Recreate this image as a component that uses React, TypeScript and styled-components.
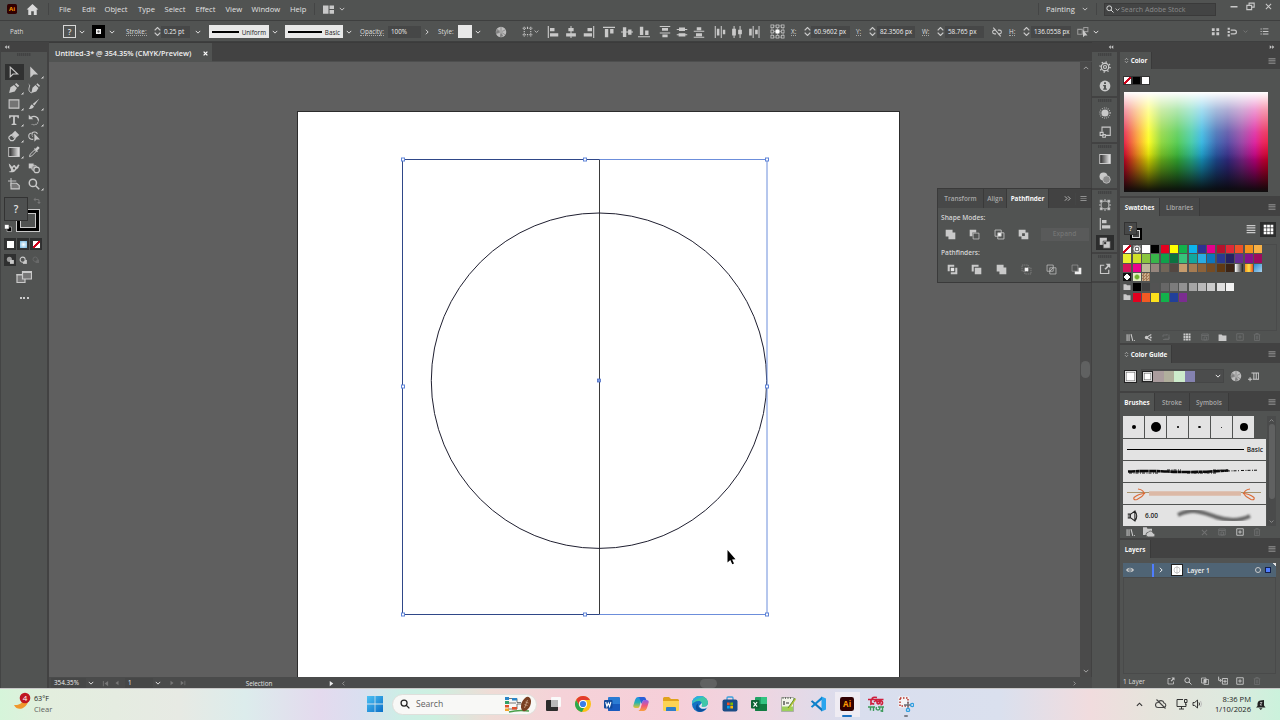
import React from 'react';
import styled, { createGlobalStyle, css } from 'styled-components';

const GlobalStyle = createGlobalStyle`
  * {
    box-sizing: border-box;
  }

  body {
    margin: 0;
    overflow: hidden;
    background: #515352;
    font-family: 'Open Sans', 'Noto Sans', sans-serif;
    font-size: 7px;
    color: #dcdcdc;
  }

  svg {
    display: block;
    flex-shrink: 0;
  }
`;

const panel = '#515352';
const dark = '#424242';
const line = '#3e3f3f';
const light = '#c9c9c9';

/* ---------- icons, all on a 16 unit grid ---------- */

const glyphs: Record<string, React.ReactNode> = {
  home: <path d="M8 1.2 0.8 8h2v6.8h3.6V10h3.2v4.8h3.6V8h2z" />,
  layout: <path d="M0 2h8v12H0zM9.5 2H16v5.2H9.5zM9.5 8.8H16V14H9.5z" />,
  down: <path d="m2 5 6 6 6-6" fill="none" stroke="currentColor" strokeWidth="2.6" />,
  up: <path d="m2 11 6-6 6 6" fill="none" stroke="currentColor" strokeWidth="2.6" />,
  right: <path d="m5 2 6 6-6 6" fill="none" stroke="currentColor" strokeWidth="2.4" />,
  left: <path d="M11 2 5 8l6 6" fill="none" stroke="currentColor" strokeWidth="2.4" />,
  spinner: <path d="m3 6 5-5 5 5M3 10l5 5 5-5" fill="none" stroke="currentColor" strokeWidth="2.2" />,
  collapseL: <path d="M7.5 3v10L2 8zM14 3v10L8.500 8z" />,
  collapseR: <path d="M2 3v10l5.500-5zM8.500 3v10L14 8z" />,
  doubleRight: <path d="m2 3 5 5-5 5M9 3l5 5-5 5" fill="none" stroke="currentColor" strokeWidth="2" />,
  search: (
    <g fill="none" stroke="currentColor" strokeWidth="2">
      <circle cx="6.500" cy="6.500" r="4.800" />
      <path d="m10 10 5 5" />
    </g>
  ),
  minimize: <path d="M1 8h14v3H1z" />,
  restore: <path d="M5.500 6V2h9v7H10M1.500 6h8.500v7.500H1.500z" fill="none" stroke="currentColor" strokeWidth="2" />,
  close: <path d="m2 2 12 12M14 2 2 14" fill="none" stroke="currentColor" strokeWidth="2.300" />,
  closeBold: <path d="m2 2 12 12M14 2 2 14" fill="none" stroke="currentColor" strokeWidth="4" />,
  menu: <path d="M1 3h14v1.500H1zM1 7.200h14v1.500H1zM1 11.500h14V13H1z" />,
  lines: <path d="M1 1.500h14v2H1zM1 5.200h14v2H1zM1 9h14v2H1zM1 12.700h14v2H1z" />,
  globe: (
    <>
      <circle cx="8" cy="8" r="7" fill="#bdbdbd" />
      <path d="M8 8 2 4M8 8 8 1M8 8l6-3M8 8l6 4M8 8l-1 7M8 8l-6.500 2" stroke="#666" strokeWidth=".7" />
      <path d="M8 8 2 5l-.8 5zM8 8l-1 6.800 4-1.200z" fill="#808080" />
      <circle cx="8" cy="8" r="2.200" fill="#a6a6a6" />
    </>
  ),
  dotted: <path d="M2 4h12M2 12h12M4 2v12M12 2v12M8 2v3M8 11v3" fill="none" stroke="currentColor" strokeWidth="1.400" strokeDasharray="1.500 1.200" />,
  alignL: <path d="M1 0h1.500v16H1zM4 2.500h6v4.500H4zM4 9.500h11V14H4z" />,
  alignC: <path d="M7.300 0h1.400v16H7.300zM4.500 2.500h7V7h-7zM1.500 9.500h13V14h-13z" />,
  alignR: <path d="M13.500 0H15v16h-1.500zM6 2.500h6V7H6zM1 9.500h11V14H1z" />,
  alignT: <path d="M0 1h16v1.500H0zM2.500 4H7v11H2.500zM9.500 4H14v6H9.500z" />,
  alignM: <path d="M0 7.300h16v1.400H0zM2.500 1.500H7v13H2.500zM9.500 4.500H14v7H9.500z" />,
  alignB: <path d="M0 13.500h16V15H0zM2.500 1H7v11H2.500zM9.500 6H14v6H9.500z" />,
  distT: <path d="M1 0h14v1.400H1zM4 2.800h8v3.600H4zM1 8.500h14v1.400H1zM4.500 11.300h7V15h-7z" />,
  distM: <path d="M1 4h14v1.400H1zM4 2h8v4.500H4zM1 11h14v1.400H1zM3.500 9.500h9V14h-9z" />,
  distB: <path d="M1 6.200h14v1.400H1zM5 1.500h6v4H5zM1 14.200h14v1.400H1zM4 9.500h8v4H4z" />,
  distL: <path d="M1 0h1.400v16H1zM3.800 3.500h3.400v9H3.800zM9 0h1.400v16H9zM11.800 5H15v6h-3.200z" />,
  distC: <path d="M3.400 0h1.400v16H3.400zM1.500 3.500h5v9h-5zM11.400 0h1.400v16h-1.400zM9.500 5h5v6h-5z" />,
  distR: <path d="M6.200 0h1.400v16H6.200zM1.500 3.500H5v9H1.500zM14 0h1.400v16H14zM9.500 5H13v6H9.500z" />,
  refPoint: (
    <>
      <path d="M2 2h12v12H2zM8 2v12M2 8h12" fill="none" stroke="#999" strokeWidth="1" />
      {[2.5, 8, 13.5].map((y) =>
        [2.5, 8, 13.5].map((x) => (
          <rect key={`${x}-${y}`} x={x - 1.5} y={y - 1.5} width="3" height="3" fill={panel} stroke="currentColor" strokeWidth=".8" />
        )),
      )}
      <rect x="6" y="6" width="4" height="4" fill="#fff" />
    </>
  ),
  unlink: (
    <g fill="none" stroke="currentColor" strokeWidth="1.700">
      <path d="M6.500 5H4a3 3 0 0 0 0 6h2.500M9.500 5H12a3 3 0 0 1 0 6H9.500M2 1l12 14" />
    </g>
  ),
  isolate: (
    <>
      <path d="M1 4.500h6V11H1zM9 2h5.500v5.500H9z" fill="none" stroke="#9b9b9b" strokeWidth="1.400" />
      <path d="m8 5 0 10 2.500-2.500H14z" />
    </>
  ),
  fourGrid: <path d="M1.500 2h5v5h-5zM9.500 2h5v5h-5zM1.500 9.500h5v5h-5zM9.500 9.500h5v5h-5z" />,
  snap: (
    <>
      <path d="M1 1h3.500v3.500H1zM1 6.200h3.500v3.500H1zM1 11.500h3.500V15H1z" />
      <path d="M6 5h6a3 3 0 0 1 0 6H6" fill="none" stroke="currentColor" strokeWidth="2" />
    </>
  ),
  list: <path d="M1 2.500h2v2H1zM5 2.700h10v1.500H5zM1 7h2v2H1zM5 7.200h10v1.500H5zM1 11.500h2v2H1zM5 11.700h10v1.500H5z" />,
  select: <path d="M3 1.500v12.800l3.800-3.600h6z" fill="none" stroke="currentColor" strokeWidth="1.500" />,
  direct: <path d="M3 .5v15l4.500-4.300h6z" />,
  pen: <path d="M1.500 14.800 3.300 7 8 4l4 4-3 4.800zM9.200 3 11 1.200 15 5l-1.900 1.900z" />,
  curvature: (
    <>
      <path d="M4.500 14.800 6 7.500 10 4l4 4-3 4.500zM11 3l1.600-1.500L16 5l-1.300 1.500z" />
      <path d="M1 3c3 2-1 5 .5 8.500.5 1.500 1.500 2.500 3.500 3" fill="none" stroke="currentColor" strokeWidth="1.300" />
    </>
  ),
  rect: <path d="M1.500 2.500h13v11h-13z" fill="#747474" stroke="currentColor" strokeWidth="1.500" />,
  brush: <path d="M15 1 8.500 10 6.300 8zM5.300 8.600l2.600 2.500c-.6 3-3.600 4-7 3.500C2.800 13.600 2.500 9.500 5.300 8.600z" />,
  type: <path d="M1.500 1.500h13V5.500H13L12.300 3.600H9.200v9.100l2 .6v1.200H4.800v-1.200l2-.6V3.600H3.700L3 5.500H1.500z" />,
  rotate: (
    <>
      <path d="M4 4.800a6 6 0 0 1 10 3.700" fill="none" stroke="currentColor" strokeWidth="1.800" />
      <path d="M14 8.500a6 6 0 0 1-9 5" fill="none" stroke="currentColor" strokeWidth="1.500" strokeDasharray="1.500 1.300" />
      <path d="M1 1v6h6z" />
    </>
  ),
  eraser: (
    <>
      <path d="m9.500 1 5.500 5.500L10 11 4.800 5.600z" />
      <path d="m4.300 6.300 5.200 5.200-2.700 2.700H3.500L1.200 11V9.300z" fill="none" stroke="currentColor" strokeWidth="1.500" />
    </>
  ),
  shapeBuilder: (
    <>
      <path d="M7 12.500C2.500 12.500 1 10.500 1 8s2-4 4.500-4C7 1.800 12 2 12.500 5.500" fill="none" stroke="currentColor" strokeWidth="1.400" />
      <path d="M4 6.500h5M6 4v6" stroke="currentColor" strokeDasharray="1 1" />
      <path d="M8.500 4.500v11l2.800-2.700H16z" />
    </>
  ),
  eyedropper: (
    <>
      <path d="M2 14.200 2.800 11 8.500 5.500 10.600 7.600 5 13.200z" fill="none" stroke="currentColor" strokeWidth="1.300" />
      <path d="m8 4 1.200-1.200 1 1L12.500.8c1.200-1 3.500 1 2.500 2.500L12.200 6l1 1L12 8.200z" />
    </>
  ),
  puppet: (
    <>
      <path d="M1 2c2 1 3 3 4.500 4.500C7 4 9 3 10 5.500c.5 1.500 2 1 2.500-1S15 3 15.500 4.500c-1.500 0-1 3-2.500 4S10.500 10 9.500 12 2 14.500 1 12.500C4 13 5 11 3.500 9S1.500 5 1 2z" />
      <circle cx="8" cy="8.500" r="1.500" fill={panel} />
    </>
  ),
  blend: (
    <>
      <path d="M1 2h6.500v6.500H1z" />
      <circle cx="8.500" cy="8" r="3.700" fill="#919191" stroke="currentColor" />
      <circle cx="11.500" cy="10.500" r="3.700" fill={panel} stroke="currentColor" strokeWidth="1.500" />
    </>
  ),
  artboard: (
    <>
      <path d="M4 0v11M0 4h11" stroke="currentColor" strokeWidth="1.300" />
      <path d="M4 7h7.500L15 10v4.500H4z" fill="#777" stroke="currentColor" strokeWidth="1.500" />
    </>
  ),
  modeNormal: (
    <>
      <circle cx="6" cy="6" r="4.500" fill="#9a9a9a" />
      <path d="M7 7h7v7H7z" />
    </>
  ),
  modeBehind: (
    <>
      <path d="M7 7h7v7H7z" />
      <circle cx="6.500" cy="6.500" r="4.500" fill={panel} stroke="currentColor" strokeWidth="1.800" />
    </>
  ),
  screens: (
    <>
      <path d="M1 5.500h8v8H1z" fill="#777" stroke="currentColor" strokeWidth="1.200" />
      <path d="M6.500 2.500h9v7.500h-9z" fill="#777" stroke="currentColor" strokeWidth="1.200" />
      <path d="M6 2h10v2H6zM.5 5h5.500v1.500H.5z" />
    </>
  ),
  gear: (
    <g fill="none" stroke="currentColor">
      <circle cx="8" cy="8" r="5" strokeWidth="1.700" />
      <circle cx="8" cy="8" r="2" strokeWidth="1.600" />
      <circle cx="8" cy="8" r="6.700" strokeWidth="2" strokeDasharray="1.700 3.560" />
    </g>
  ),
  info: (
    <>
      <circle cx="8" cy="8" r="7.200" />
      <path d="M6.700 3h2.600v2.300H6.700zM5.500 6.800h3.800v4.500h1.200V13h-5v-1.700h1.200V8.400H5.500z" fill={panel} />
    </>
  ),
  sun: (
    <>
      <circle cx="8" cy="8" r="4.800" />
      <circle cx="8" cy="8" r="6.800" fill="none" stroke="currentColor" strokeWidth="1.500" strokeDasharray="1 1.700" />
    </>
  ),
  export: (
    <>
      <path d="M4 7.500V1.500h11v11H9" fill="none" stroke="currentColor" strokeWidth="1.400" />
      <path d="M1.500 8.500h4v4h-4zM5 11.500h3.500v3.500H5z" fill={panel} stroke="currentColor" strokeWidth="1.400" />
    </>
  ),
  transparency: (
    <>
      <circle cx="6" cy="6" r="5.300" />
      <circle cx="10" cy="10" r="5" fill="#8b8b8b" stroke="currentColor" />
    </>
  ),
  transform: (
    <>
      <path d="M3 3h10v10H3z" fill="none" stroke="currentColor" strokeWidth="1.400" />
      <path d="M1 1h4v4H1zM11 1h4v4h-4zM1 11h4v4H1zM11 11h4v4h-4zM7 0h2v3H7zM7 13h2v3H7zM0 7h3v2H0zM13 7h3v2h-3z" stroke={panel} strokeWidth=".5" />
    </>
  ),
  pathfinder: (
    <>
      <path d="M1 1h9.500v9.500H1z" />
      <path d="M5.500 5.500H15V15H5.500z" stroke={dark} />
      <path d="M6.800 6.800h2.800v2.800H6.800z" fill="#333" />
    </>
  ),
  openOut: (
    <>
      <path d="M7 3H2v11h11V9" fill="none" stroke="currentColor" strokeWidth="1.600" />
      <path d="M9 1h6v6l-2-2-4 4L7.300 7.500l4-4z" />
    </>
  ),
  unite: <path d="M1 1h10v4h4v10H5v-4H1z" />,
  minusFront: (
    <>
      <path d="M1 1h9.500v4H5v5.500H1z" />
      <path d="M6 6h8.500v8.500H6z" fill="none" stroke="currentColor" strokeWidth="1.100" />
    </>
  ),
  intersect: (
    <>
      <path d="M1.500 1.500h9v9h-9zM5.500 5.500h9v9h-9z" fill="none" stroke="currentColor" strokeWidth="1.200" />
      <path d="M6 6h4v4H6z" fill="#fff" />
    </>
  ),
  exclude: <path fillRule="evenodd" d="M1 1h10v4h4v10H5v-4H1zM6 6v4h4V6z" />,
  divide: (
    <>
      <path d="M1 1h9.500v3H4v6.500H1zM12 5.500h3V15H5.500v-3H12z" />
      <path d="M5.500 5.500h5v5h-5z" fill="#e6e6e6" />
    </>
  ),
  trim: <path d="M1 1h10v3H4v7H1zM5.500 5.500H15V15H5.500z" />,
  crop: (
    <>
      <path d="M1.500 1.500h9v9h-9zM5.500 5.500h9v9h-9z" fill="none" stroke="#929292" strokeDasharray="2 1" />
      <path d="M5.500 5.500h5v5h-5z" fill="#f2f2f2" />
    </>
  ),
  outline: <path d="M1.500 1.500h9v9h-9zM5.500 5.500h9v9h-9zM5.500 10.500l5-5" fill="none" stroke="currentColor" />,
  minusBack: (
    <>
      <path d="M1.500 1.500h8.500v9H1.500z" fill="none" stroke="#999" />
      <path d="M11 5.500h4V15H5.500v-4H11z" fill="#eee" />
    </>
  ),
  library: <path d="M1 2h1.800v12H1zM4.500 2h1.800v12H4.500zM8 2l2-.4L13 14l-1.800.3zM14.500 12.500H16V14h-1.500z" />,
  kuler: (
    <>
      <path d="M13 2.500 4 8l9 5.500" fill="none" stroke="currentColor" strokeWidth="2" />
      <circle cx="4.500" cy="8" r="3" />
      <circle cx="12" cy="8" r="1.800" />
    </>
  ),
  refresh: <path d="M2 8V4h9l-2-2M14 8v4H5l2 2M2 13h12V3" fill="none" stroke="currentColor" strokeWidth="1.700" />,
  grid: <path d="M1 1h4v4H1zM6 1h4v4H6zM11 1h4v4h-4zM1 6h4v4H1zM6 6h4v4H6zM11 6h4v4h-4zM1 11h4v4H1zM6 11h4v4H6zM11 11h4v4h-4z" />,
  options: <path d="M1.500 2h13v12h-13zM1.500 5h13M6 8h5v6H6z" fill="none" stroke="currentColor" strokeWidth="1.700" />,
  folder: <path d="M1 2.500h5.500L8 4.500h7V14H1z" />,
  plus: <path d="M1.500 1.500h13v13h-13zM8 4.500v7M4.500 8h7" fill="none" stroke="currentColor" strokeWidth="1.800" />,
  trash: <path d="M1.500 3.500h13M5.500 3V1h5v2M3 4v11h10V4M6.500 6v7M9.500 6v7" fill="none" stroke="currentColor" strokeWidth="1.700" />,
  addGroup: <path d="M5 3h10.500v9H7M8.500 3v9M12 3v9M3 9v6M0 12h6" fill="none" stroke="currentColor" strokeWidth="1.500" />,
  folderCloud: (
    <>
      <path d="M0 1.500h5l1 2h6V9H6l-2 3H0z" />
      <path d="M7 14.500a3 3 0 0 1 0-6 3.500 3.500 0 0 1 6.500 1 2.500 2.500 0 0 1 0 5z" stroke={panel} />
    </>
  ),
  eye: (
    <>
      <path d="M0 8c4-6 12-6 16 0-4 6-12 6-16 0z" />
      <circle cx="8" cy="8" r="3.300" fill="#4f6373" />
      <circle cx="8" cy="8" r="1.600" />
    </>
  ),
  clip: (
    <>
      <path d="M1 2h9v10H1zM6 5h9v10H6z" fill="none" stroke="currentColor" strokeWidth="1.500" />
      <path d="M5.500 5h5v6.500h-5z" />
    </>
  ),
  sublayer: <path d="M1 1v6h4M3 4.500 5.500 7 3 9.500M7 4h8.500v9H7zM11.200 6v5M8.500 8.500h5.500" fill="none" stroke="currentColor" strokeWidth="1.500" />,
  first: <path d="M2 2h2v12H2zM14 2v12L6 8z" />,
  prev: <path d="M12 2v12L4 8z" />,
  next: <path d="M4 2v12l8-6z" />,
  last: <path d="M12 2h2v12h-2zM2 2v12l8-6z" />,
  swap: <path d="M1 5 5 1v3h5q3 0 3 3v3h2.500L12 14.500 8.500 10H11V7.500q0-1.500-1.500-1.500H5v3z" />,
  defaults: (
    <>
      <path d="M6 6h9v9H6z" fill="#000" stroke="#eee" />
      <path d="M1 1h9v9H1z" fill="#fff" stroke="#333" />
    </>
  ),
  bristle: (
    <path
      d="M1 5.500h3.500v5H1M1 8h3M5 5.500l5.500-4v13L5 10.500M10.500 1.500q5 6.500 0 13"
      fill="none"
      stroke="currentColor"
      strokeWidth="1.400"
    />
  ),
};

type IconProps = { name: string; size?: number; color?: string };

const Icon = ({ name, size = 12, color = light }: IconProps) => (
  <svg width={size} height={size} viewBox="0 0 16 16" fill="currentColor" color={color}>
    {glyphs[name]}
  </svg>
);

/* ---------- shared pieces ---------- */

const Slot = styled.div<{ $w?: number; $gap?: number; $center?: boolean }>`
  display: flex;
  align-items: center;
  flex: none;
  height: 100%;
  width: ${(p) => (p.$w ? `${p.$w}px` : 'auto')};
  margin-left: ${(p) => p.$gap ?? 0}px;
  justify-content: ${(p) => (p.$center ? 'center' : 'flex-start')};
  white-space: nowrap;
`;

const Shell = styled.div`
  width: 1280px;
  height: 720px;
  display: flex;
  flex-direction: column;
  background: ${panel};
`;

/* ---------- menu bar ---------- */

const MenuBar = styled.header`
  height: 20px;
  flex: none;
  display: flex;
  align-items: center;
  padding-bottom: 2px;
  font-size: 7.6px;
  color: #e2e2e2;
`;

const AppMark = styled.div<{ $size: number; $font: number }>`
  width: ${(p) => p.$size}px;
  height: ${(p) => p.$size}px;
  border-radius: ${(p) => p.$size / 6}px;
  background: #310000;
  color: #ff9a00;
  font-weight: 700;
  font-size: ${(p) => p.$font}px;
  line-height: 1;
  display: flex;
  align-items: center;
  justify-content: center;
`;

const Divider = styled.i<{ $gap?: number }>`
  width: 1px;
  height: 12px;
  flex: none;
  margin-left: ${(p) => p.$gap ?? 0}px;
  background: #444545;
`;

const StockSearch = styled.div`
  width: 112px;
  height: 13px;
  margin-left: 7px;
  padding-left: 1px;
  flex: none;
  display: flex;
  align-items: center;
  gap: 1px;
  background: #434444;
  border: 1px solid #3a3a3a;
  color: #8b8b8b;
  font-size: 7px;
  white-space: nowrap;
`;

const WindowButtons = styled.div`
  display: flex;
  align-items: center;
  margin: -6px 0 0 14px;
`;

/* ---------- control bar ---------- */

const ControlBar = styled.div`
  height: 22px;
  flex: none;
  display: flex;
  align-items: center;
  padding-top: 1px;
  border-top: 1px solid ${line};
  border-bottom: 1px solid ${line};
  font-size: 6.3px;
  color: #dedede;
`;

const Dotted = styled.span`
  border-bottom: 1px dotted #a8a8a8;
  line-height: 7px;
`;

const Field = styled.div<{ $w: number; $gap?: number; $h?: number }>`
  width: ${(p) => p.$w}px;
  height: ${(p) => p.$h ?? 12}px;
  flex: none;
  margin-left: ${(p) => p.$gap ?? 0}px;
  padding-left: 3px;
  line-height: ${(p) => p.$h ?? 12}px;
  white-space: nowrap;
  background: #464747;
  color: #efefef;
`;

const StrokePreview = styled.div<{ $w: number; $gap?: number }>`
  width: ${(p) => p.$w}px;
  height: 13px;
  flex: none;
  margin-left: ${(p) => p.$gap ?? 0}px;
  padding: 1px 3px 0;
  display: flex;
  align-items: center;
  gap: 3px;
  background: #e8e8e8;
  color: #222;

  &::before {
    content: '';
    flex: 1;
    height: 2px;
    margin-bottom: 1px;
    background: #000;
  }
`;

const FillBox = styled.div`
  width: 13px;
  height: 13px;
  flex: none;
  border: 1px solid #d8d8d8;
  text-align: center;
  line-height: 11px;
  font-size: 8px;
  font-weight: 600;
`;

const StrokeBox = styled.div<{ $gap?: number }>`
  width: 13px;
  height: 13px;
  flex: none;
  margin-left: ${(p) => p.$gap ?? 0}px;
  border: 4px solid #000;
  background: radial-gradient(#666 20%, #eee 45%);
`;

const StyleSwatch = styled.div`
  width: 14px;
  height: 13px;
  flex: none;
  background: #e8e8e8;
`;

/* ---------- workspace ---------- */

const Workspace = styled.main`
  height: 646px;
  flex: none;
  display: flex;
  position: relative;
`;

const ToolColumn = styled.aside`
  width: 49px;
  flex: none;
  border-right: 2px solid ${dark};
  border-left: 1px solid #434444;
  display: flex;
  flex-direction: column;
`;

const Strip = styled.div<{ $right?: boolean }>`
  height: 10px;
  flex: none;
  background: ${dark};
  display: flex;
  align-items: center;
  justify-content: ${(p) => (p.$right ? 'flex-end' : 'flex-start')};
  padding: 0 3px;
`;

const Grip = styled.div`
  width: 14px;
  height: 3px;
  flex: none;
  margin: 1px auto 0;
  background: repeating-linear-gradient(90deg, #424343 0 1px, #4a4b4b 1px 2px);
`;

const ToolGrid = styled.div`
  display: grid;
  grid-template-columns: 20px 20px;
  grid-auto-rows: 16px;
  margin: 8px 0 0 3px;
`;

const Tool = styled.div<{ $active?: boolean; $more?: boolean }>`
  display: flex;
  align-items: center;
  justify-content: center;
  background: ${(p) => (p.$active ? '#303131' : 'none')};
  margin: 0 0.5px;

  ${(p) =>
    p.$more &&
    css`
      background: linear-gradient(135deg, transparent 50%, #ccc 50%) 16px 12px / 2.500px 2.500px no-repeat;
    `}
`;

const PaintBoxes = styled.div`
  position: relative;
  height: 38px;
  margin: 4px 0 0 3px;
`;

const PaintFill = styled.div`
  position: absolute;
  left: 0;
  top: 1px;
  width: 24px;
  height: 24px;
  background: #4e5050;
  border: 1px solid #333;
  color: #e6e6e6;
  font-size: 10px;
  font-weight: 600;
  line-height: 22px;
  text-align: center;
`;

const PaintStroke = styled.div`
  position: absolute;
  left: 12px;
  top: 13px;
  width: 24px;
  height: 23px;
  border: 5px solid #000;
  background: ${panel};
  outline: 1px solid #c8c8c8;
  outline-offset: -1px;

  &::after {
    content: '';
    display: block;
    height: 100%;
    outline: 1px solid #c8c8c8;
  }
`;

const Corner = styled.div<{ $x: number; $y: number }>`
  position: absolute;
  left: ${(p) => p.$x}px;
  top: ${(p) => p.$y}px;
`;

const ToolRow = styled.div<{ $top: number }>`
  display: flex;
  gap: 1px;
  margin: ${(p) => p.$top}px 0 0 3px;
`;

const ToolChip = styled.div<{ $dark?: boolean }>`
  width: 12px;
  height: 12px;
  display: flex;
  align-items: center;
  justify-content: center;
  background: ${(p) => (p.$dark ? '#2f3030' : 'none')};
`;

const noneFill = 'linear-gradient(135deg, #fff 40%, #d0021b 40% 60%, #fff 60%)';

const Chip = styled.i<{ $bg: string }>`
  display: block;
  flex: none;
  width: 9px;
  height: 9px;
  background: ${(p) => p.$bg};
  border: 0.5px solid #333;
`;

const Dots = styled.div`
  margin: 12px auto 0;
  width: 9px;
  height: 2px;
  background: repeating-linear-gradient(90deg, #ccc 0 2px, transparent 2px 3.500px);
`;

/* ---------- document ---------- */

const Document = styled.section`
  width: 1043px;
  flex: none;
  display: flex;
  flex-direction: column;
`;

const DocTabs = styled.div`
  height: 20px;
  flex: none;
  background: ${dark};
  border-top: 1px solid #3b3b3b;
  border-bottom: 1px solid #4e4f4f;
`;

const DocTab = styled.div`
  width: 163px;
  height: 20px;
  padding: 0 4px 0 6px;
  display: flex;
  align-items: center;
  justify-content: space-between;
  background: ${panel};
  color: #f2f2f2;
  font-size: 7.3px;
  font-weight: 600;
`;

const Canvas = styled.div`
  flex: 1;
  display: flex;
  background: #5f5f5f;
  overflow: hidden;
`;

const Pasteboard = styled.div`
  width: 1031px;
  padding: 49px 0 0 248px;
`;

const Artboard = styled.div`
  width: 603px;
  height: 600px;
  background: #fff;
  border: 1px solid #2c2c2c;
`;

const VScroll = styled.div`
  width: 12px;
  display: flex;
  flex-direction: column;
  align-items: center;
  justify-content: space-between;
  padding: 3px 0;
  background: #4a4a4a;
  border-right: 1px solid ${dark};
`;

const Thumb = styled.i<{ $w: number; $h: number }>`
  width: ${(p) => p.$w}px;
  height: ${(p) => p.$h}px;
  border-radius: 5px;
  background: #606161;
`;

const StatusBar = styled.div`
  height: 11px;
  flex: none;
  display: flex;
  align-items: center;
  padding-top: 1px;
  background: #4a4b4b;
  font-size: 6.3px;
  color: #e4e4e4;
`;

/* ---------- pathfinder ---------- */

const Pathfinder = styled.div`
  position: absolute;
  left: 937px;
  top: 146px;
  width: 155px;
  height: 95px;
  background: ${panel};
  border: 1px solid #3a3a3a;
  font-size: 6.6px;
  font-weight: 600;
  color: #d4d4d4;
`;

const TabStrip = styled.div<{ $h?: number }>`
  height: ${(p) => p.$h ?? 18}px;
  flex: none;
  display: flex;
  align-items: center;
  background: ${dark};
  padding-right: 4px;
`;

const Tab = styled.div<{ $w: number; $active?: boolean }>`
  width: ${(p) => p.$w}px;
  height: 100%;
  flex: none;
  display: flex;
  align-items: center;
  justify-content: center;
  gap: 2px;
  border-right: 1px solid #3a3a3a;
  background: ${(p) => (p.$active ? panel : '#474848')};
  color: ${(p) => (p.$active ? '#f8f8f8' : '#a9a9a9')};
  font-size: ${(p) => (p.$active ? 6.3 : 6.4)}px;
  font-weight: ${(p) => (p.$active ? 700 : 600)};
  white-space: nowrap;
`;

const Push = styled.div`
  margin-left: auto;
  display: flex;
  align-items: center;
  gap: 4px;
`;

const PathLabel = styled.div`
  height: 10px;
  margin: 5px 0 0 3px;
  line-height: 10px;
`;

const PathRow = styled.div<{ $start: number; $gap: number }>`
  height: 20px;
  display: flex;
  align-items: center;
  gap: ${(p) => p.$gap}px;
  padding: 2px 0 0 ${(p) => p.$start}px;
`;

const Expand = styled.div`
  width: 48px;
  height: 13px;
  margin-left: -2px;
  background: #595a5a;
  color: #737474;
  text-align: center;
  line-height: 12px;
`;

/* ---------- dock and panels ---------- */

const DockArea = styled.div`
  width: 188px;
  display: flex;
  flex-direction: column;
`;

const DockHead = styled.div`
  display: flex;

  ${Strip}:first-child {
    width: 25px;
  }

  ${Strip}:last-child {
    flex: 1;
    padding-right: 5px;
  }
`;

const DockBody = styled.div`
  flex: 1;
  display: flex;
`;

const IconDock = styled.div`
  width: 28px;
  flex: none;
  border-right: 3px solid ${dark};
`;

const DockGroup = styled.div<{ $h: number }>`
  height: ${(p) => p.$h}px;
  border-bottom: 2px solid ${dark};
  display: flex;
  flex-direction: column;
  align-items: center;
`;

const DockItem = styled.div<{ $active?: boolean }>`
  width: 18px;
  height: 15px;
  margin-top: 3.8px;
  display: flex;
  align-items: center;
  justify-content: center;
  background: ${(p) => (p.$active ? '#2c2d2d' : 'none')};
`;

const Panels = styled.div`
  flex: 1;
  display: flex;
  flex-direction: column;
  gap: 2px;
  background: ${dark};
`;

const Panel = styled.section<{ $h: number }>`
  height: ${(p) => p.$h}px;
  flex: none;
  background: ${panel};
  display: flex;
  flex-direction: column;
`;

const QuickColors = styled.div`
  display: flex;
  margin: 7px 0 7px 3px;
`;

const Spectrum = styled.div`
  width: 144px;
  height: 100px;
  margin-left: 4px;
  background:
    linear-gradient(180deg, #fff 0%, rgba(255, 255, 255, 0.6) 18%, rgba(255, 255, 255, 0.25) 40%, rgba(255, 255, 255, 0.08) 58%, rgba(255, 255, 255, 0) 68%),
    linear-gradient(180deg, rgba(0, 0, 0, 0) 50%, rgba(0, 0, 0, 0.12) 62%, rgba(0, 0, 0, 0.45) 78%, rgba(8, 8, 8, 0.92) 97%, #111 100%),
    linear-gradient(90deg, #e3002b 0%, #f98a16 9%, #fdfd00 17%, #7dd022 26%, #3cc43a 37%, #2cc49c 47%, #1aacdc 54%, #2456a8 64%, #3a3296 72%, #8a2a98 82%, #d80090 91%, #e6004a 96%, #e6002c 100%);
`;

const SwatchTop = styled.div`
  height: 27px;
  display: flex;
  align-items: center;
  justify-content: space-between;
  padding: 0 4px;
`;

const MiniPaint = styled.div`
  width: 19px;
  height: 18px;
  position: relative;
  margin-top: 3px;
`;

const MiniFill = styled.div`
  position: absolute;
  width: 13px;
  height: 13px;
  background: #474848;
  border: 1px solid #333;
  text-align: center;
  font-size: 7.5px;
  font-weight: 600;
  line-height: 11px;
`;

const MiniStroke = styled.div`
  position: absolute;
  left: 6px;
  top: 6px;
  width: 12px;
  height: 12px;
  border: 2px solid #000;
  background: #444;
  box-shadow: inset 0 0 0 1px #d0d0d0;
`;

const ViewToggle = styled.div`
  display: flex;
  gap: 1px;
`;

const ViewButton = styled.div<{ $active?: boolean }>`
  width: 16px;
  height: 15px;
  display: flex;
  align-items: center;
  justify-content: center;
  background: ${(p) => (p.$active ? '#2c2d2d' : 'none')};
`;

const SwatchWell = styled.div`
  width: 154px;
  height: 88px;
  margin: 1px 0 0 3px;
  padding-left: 0.400px;
  border: 1px solid #4a4b4b;
  border-left: none;
`;

const SwatchRow = styled.div<{ $top?: number }>`
  display: flex;
  gap: 1.330px;
  height: 8.400px;
  margin-bottom: 1px;
  margin-top: ${(p) => p.$top ?? 0}px;
`;

const Swatch = styled.i<{ $bg: string }>`
  width: 8px;
  height: 8.400px;
  flex: none;
  background: ${(p) => p.$bg};
`;

const PanelFoot = styled.div<{ $pad?: number; $h?: number }>`
  height: ${(p) => p.$h ?? 12}px;
  margin-top: auto;
  display: flex;
  align-items: center;
  padding-left: ${(p) => p.$pad ?? 5}px;
  font-size: 6.5px;
`;

const GuideRow = styled.div`
  flex: 1;
  display: flex;
  align-items: center;
  padding: 0 0 2px 4px;
`;

const BaseColor = styled.div<{ $size: number }>`
  width: ${(p) => p.$size}px;
  height: ${(p) => p.$size}px;
  flex: none;
  background: #fff;
  border: 1px solid #222;
  box-shadow: inset 0 0 0 1px #ddd, inset 0 0 0 1.500px #666;
`;

const Harmony = styled.div`
  width: 83px;
  height: 14px;
  margin-left: 4px;
  display: flex;
  align-items: center;
  background: #4b4c4c;
  border: 1px solid #454646;
`;

const HarmonyColor = styled.i<{ $bg: string }>`
  width: 10.600px;
  height: 11px;
  flex: none;
  background: ${(p) => p.$bg};
`;

const BrushArea = styled.div`
  display: flex;
  gap: 1px;
  margin: 5px 0 0 3px;
`;

const BrushList = styled.div`
  width: 143px;
  display: flex;
  flex-direction: column;
  gap: 1px;
`;

const BrushDots = styled.div`
  display: flex;
  gap: 1px;
  height: 22px;
`;

const BrushDot = styled.div<{ $d: number }>`
  width: 21px;
  background: #e3e3e3;
  display: flex;
  align-items: center;
  justify-content: center;

  &::after {
    content: '';
    width: ${(p) => p.$d}px;
    height: ${(p) => (p.$d > 3 ? p.$d : p.$d / 2 + 0.5)}px;
    border-radius: 50%;
    background: #000;
  }
`;

const BrushRow = styled.div`
  height: 21px;
  background: #e3e3e3;
  color: #222;
  display: flex;
  align-items: center;
  padding: 0 3px 0 4px;
  font-size: 6.5px;
  font-weight: 600;
`;

const BasicLine = styled.i`
  flex: 1;
  height: 1.500px;
  margin-right: 3px;
  background: #000;
`;

const BrushScroll = styled.div`
  width: 9px;
  height: 110px;
  display: flex;
  flex-direction: column;
  align-items: center;
  gap: 1px;
  padding: 2px 0;
  background: #4a4b4b;
`;

const BrushThumb = styled.i`
  width: 6px;
  flex: 1;
  margin-bottom: 19px;
  border-radius: 3px;
  background: #606161;
`;

const LayerRow = styled.div`
  height: 14px;
  margin: 5px 4px 0 3px;
  display: flex;
  align-items: center;
  background: linear-gradient(45deg, transparent 50%, #e4e4e4 50%) 100% 0 / 4px 4px no-repeat #4f6475;
  color: #f0f0f0;
  font-size: 6.5px;
  font-weight: 600;
`;

const LayerBar = styled.i`
  width: 2px;
  height: 13px;
  margin-left: 17px;
  background: #4f7dff;
`;

const LayerTarget = styled.i`
  width: 6px;
  height: 6px;
  margin-left: auto;
  border: 1px solid #c9c9c9;
  border-radius: 50%;
`;

const LayerSelected = styled.i`
  width: 6px;
  height: 6px;
  margin: 0 5px 0 4px;
  background: #4f7dff;
  border: 1px solid #14204a;
`;

const LayerWell = styled.div`
  flex: 1;
  margin: 0 4px 0 3px;
  border: 1px solid #494a4a;
`;

/* ---------- taskbar ---------- */

const Taskbar = styled.footer`
  height: 32px;
  flex: none;
  display: flex;
  align-items: center;
  padding-bottom: 1px;
  color: #1c1c1c;
  border-top: 1px solid #c9c9c9;
  background: linear-gradient(
    90deg,
    #d6f5da 0,
    #e3eede 50px,
    #e7eae4 180px,
    #dcecec 245px,
    #e4daee 320px,
    #dadff0 360px,
    #cdeee6 400px,
    #cdf0e0 435px,
    #efdcd6 490px,
    #f5d2d8 560px,
    #f6cfd9 680px,
    #ecd6e2 770px,
    #d9deee 850px,
    #dae0ee 1000px,
    #f1dcde 1090px,
    #e6e4dc 1150px,
    #dfe9df 1220px,
    #cbf2dc 1280px
  );
`;

const Weather = styled.div`
  width: 354px;
  display: flex;
  padding-left: 13px;
  gap: 3px;
  font-size: 7.2px;
  line-height: 11px;

  svg {
    margin-top: -1px;
  }

  small {
    display: block;
    font-size: 7.6px;
    color: #5c605c;
  }
`;

const TaskSearch = styled.div`
  width: 145px;
  height: 21px;
  margin-left: 5px;
  padding: 0 4px 0 7px;
  display: flex;
  align-items: center;
  gap: 6px;
  border-radius: 11px;
  background: #f8f8f6;
  border: 1px solid #dfdfdb;
  color: #606060;
  font-size: 8.600px;
`;

const TaskApp = styled.div<{ $active?: boolean; $running?: boolean }>`
  width: 29.400px;
  height: 30px;
  display: flex;
  align-items: center;
  justify-content: center;
  position: relative;

  ${(p) =>
    p.$active &&
    css`
      background: linear-gradient(#efecf3, #efecf3) center / 25px 25px no-repeat;
    `}

  &::after {
    content: '';
    display: ${(p) => (p.$active || p.$running ? 'block' : 'none')};
    position: absolute;
    bottom: 2px;
    width: ${(p) => (p.$active ? 10 : 4)}px;
    height: 2px;
    border-radius: 1px;
    background: ${(p) => (p.$active ? '#1a6fc0' : '#7d7f88')};
  }
`;

const Tray = styled.div`
  margin-left: auto;
  padding-right: 14px;
  display: flex;
  align-items: center;
`;

const Clock = styled.div`
  width: 44px;
  text-align: right;
  font-size: 7.600px;
  line-height: 10.500px;
`;

/* ---------- data ---------- */

const menus: [string, number][] = [
  ['File', 23],
  ['Edit', 22.5],
  ['Object', 33.5],
  ['Type', 26.5],
  ['Select', 31],
  ['Effect', 30],
  ['View', 26],
  ['Window', 38.5],
  ['Help', 24],
];

const tools: [string, boolean?][] = [
  ['select'], ['direct', true],
  ['pen', true], ['curvature'],
  ['rect', true], ['brush', true],
  ['type', true], ['rotate', true],
  ['eraser', true], ['shapeBuilder'],
  ['gradient', true], ['eyedropper'],
  ['puppet'], ['blend'],
  ['artboard'], ['search', true],
];

const registration = 'radial-gradient(circle, #fff 20%, #777 25% 40%, #ddd 45% 60%, #777 65%)';

const swatchRows = [
  [noneFill, registration, '#fff', '#000', '#e3001f', '#ffff00', '#12b24b', '#0db4ec', '#2e3192', '#e4008b', '#b5122c', '#de2a36', '#ec5328', '#f3921e', '#f7b045'],
  ['#e9ee2e', '#cfdf2a', '#8ac63f', '#39b54a', '#0fa14a', '#0b7340', '#37c27b', '#12a89d', '#29abe2', '#0e76bc', '#2b3990', '#262262', '#662d91', '#86128b', '#9e0b5f'],
  ['#d4145a', '#ec008c', '#bfb89a', '#95857c', '#716558', '#534741', '#c69c6d', '#a67c52', '#8c6239', '#754c24', '#603913', '#3c2415', 'linear-gradient(90deg,#fff,#222)', 'linear-gradient(90deg,#f7931e,#ffe14a 50%,#e8541e)', 'linear-gradient(135deg,#2d8cd0,#a8d4f0)'],
  ['radial-gradient(circle,#fff 45%,#111 50%)', 'radial-gradient(circle,#6fae2e 30%,#e4efc6 55%)', 'repeating-conic-gradient(#a37a55 0 25%,#c9ad8c 0 50%) 0 0 / 3px 3px'],
];
const grays = ['#000', '#404040', '#535353', '#676767', '#7c7c7c', '#929292', '#a5a5a5', '#b9b9b9', '#cbcbcb', '#dedede', '#f2f2f2'];
const brights = ['#e3001f', '#f15a24', '#fce21c', '#12b24b', '#21409a', '#7b2d90'];

const alignIcons: [string, number][] = [
  ['alignL', 8], ['alignC', 6], ['alignR', 6],
  ['alignT', 8], ['alignM', 6], ['alignB', 5],
  ['distT', 9], ['distM', 5], ['distB', 5],
  ['distL', 9], ['distC', 5], ['distR', 5],
];

/* ---------- drawings ---------- */

const GradientIcon = ({ size }: { size: number }) => (
  <svg width={size} height={size} viewBox="0 0 16 16">
    <defs>
      <linearGradient id="toolGradient">
        <stop offset="0" stopColor="#222" />
        <stop offset="1" stopColor="#eee" />
      </linearGradient>
    </defs>
    <rect x="1" y="2" width="14" height="12" fill="url(#toolGradient)" stroke="#ccc" strokeWidth="1.3" />
  </svg>
);

const Artwork = () => (
  <svg width="601" height="565" viewBox="298 112 601 565" overflow="visible">
    <g fill="none">
      <path d="M599.5 159.500V614.500" stroke="#3a3a3a" />
      <circle cx="599" cy="380.700" r="167.700" stroke="#1f1f30" />
      <path d="M402.5 159.500H767V614.500H402.5z" stroke="#6c8edb" />
      <path d="M599.5 159.500H402.5V614.500H599.5" stroke="#2f4788" />
    </g>
    <g fill="#fff" stroke="#5f84d8" strokeWidth="1">
      {[[403, 159.5], [585, 159.5], [767, 159.5], [403, 386.5], [767, 386.5], [403, 614.5], [585, 614.5], [767, 614.5]].map(([x, y]) => (
        <rect key={`${x}-${y}`} x={x - 1.5} y={y - 1.5} width="3" height="3" />
      ))}
    </g>
    <rect x="597.5" y="379" width="3" height="3" fill="#7e9be0" stroke="#3f63c0" strokeWidth=".7" />
    <path d="M727.500 550v12.500l2.800-2.400 2 4.200 1.700-.8-1.900-4 3.400-.2z" fill="#000" />
  </svg>
);

const CharcoalBrush = () => (
  <svg width="134" height="10" viewBox="0 0 134 10">
    <path d="M1 4.500q20-1 40 0t42 0 16-1" fill="none" stroke="#0a0a0a" strokeWidth="2.600" strokeDasharray="7 .4 4 .3 9 .5" />
    <path d="M2 6h30M40 3h14M60 6h30M86 3l14 .5M100 4l12-.3M114 3.500l16-.3" fill="none" stroke="#111" strokeWidth="1" strokeDasharray="3 1.500 1 1" />
  </svg>
);

const RibbonBrush = () => (
  <svg width="136" height="16" viewBox="0 0 136 16">
    <path d="M22 7.500h92" stroke="#dcb9a6" strokeWidth="4.500" />
    <path d="M0 6.500h22M114 6.500h20" stroke="#a08a60" strokeWidth=".9" />
    <g fill="none" stroke="#dc6a35" strokeWidth="1.2">
      <path d="M11 3q6 1 6 5M18 7.500q-6 0-11 4-1 3 3 2 5-2 8-6.500" />
      <path d="M123 3q-6 1-6 5M116 7.500q6 0 11 4 1 3-3 2-5-2-8-6.500" />
    </g>
  </svg>
);

const WaveBrush = () => (
  <svg width="84" height="16" viewBox="0 0 84 16">
    <defs>
      <filter id="soft"><feGaussianBlur stdDeviation="0.8" /></filter>
    </defs>
    <path d="M4 7c16-8 26-2 38 2s24 4 34-1" fill="none" stroke="#666" strokeWidth="4" filter="url(#soft)" />
  </svg>
);

const ThumbArt = () => (
  <svg width="12" height="12" viewBox="0 0 12 12">
    <rect x=".5" y=".5" width="11" height="11" fill="#fff" stroke="#222" />
    <circle cx="6" cy="6" r="3" fill="none" stroke="#aaa" strokeWidth=".6" />
    <path d="M6 2v8" stroke="#aaa" strokeWidth=".6" />
  </svg>
);

const WindowsLogo = () => (
  <svg width="16" height="16" viewBox="0 0 16 16">
    <defs>
      <linearGradient id="win" x2="1" y2="1">
        <stop offset="0" stopColor="#4cc2f4" />
        <stop offset="1" stopColor="#0a6fc8" />
      </linearGradient>
    </defs>
    <path d="M0 0h7.600v7.600H0zM8.400 0H16v7.600H8.400zM0 8.400h7.600V16H0zM8.400 8.400H16V16H8.400z" fill="url(#win)" />
  </svg>
);

const FootballArt = () => (
  <svg width="28" height="17" viewBox="0 0 28 17">
    <path d="M4 2.500h9v4h4M4 7h8M4 13h9v-5h5" fill="none" stroke="#555" strokeWidth=".8" />
    <path d="M1 1h4v3H1z" fill="#2a86c8" />
    <path d="M1 5h4v3H1z" fill="#35a06a" />
    <path d="M1 9h4v2.500H1z" fill="#e0512c" />
    <path d="M1 12.500h4v2.500H1z" fill="#f0a52a" />
    <path d="M8 2h5v2.500H8z" fill="#2a86c8" />
    <path d="M8 11h5v2.500H8z" fill="#e0512c" />
    <path d="M5 16q9-2.500 20-1" fill="none" stroke="#4aa04a" strokeWidth="1.500" />
    <ellipse cx="22" cy="8" rx="4.500" ry="7.500" transform="rotate(22 22 8)" fill="#7a3f22" />
    <path d="m23.500 4-3 8M21.500 6l3 1M20.500 8.500l3 1" stroke="#d9b49a" strokeWidth=".7" />
  </svg>
);

const appIcons: { id: string; art: React.ReactNode; active?: boolean; running?: boolean }[] = [
  {
    id: 'taskview',
    art: (
      <>
        <rect x="6" y="1" width="10" height="10" rx="1" fill="#fafafa" />
        <rect x="1" y="4" width="12" height="11" rx="1" fill="#2c2c2c" />
        <path d="M6 4h7v7H6z" fill="#b9b9b9" />
      </>
    ),
  },
  {
    id: 'chrome',
    art: (
      <>
        <circle cx="8" cy="8" r="8" fill="#fbc116" />
        <path d="M8 0a8 8 0 0 1 7 4H8a4 4 0 0 0-3.800 5L1.100 4A8 8 0 0 1 8 0z" fill="#e33b2e" />
        <path d="M1.100 4 4.600 10A4 4 0 0 0 9 11.900L7 16A8 8 0 0 1 1.100 4z" fill="#2da94f" />
        <circle cx="8" cy="8" r="4" fill="#fff" />
        <circle cx="8" cy="8" r="3.100" fill="#3a7ee8" />
      </>
    ),
  },
  {
    id: 'word',
    art: (
      <>
        <rect x="4" y="1" width="12" height="14" rx="1" fill="#2b7cd3" />
        <path d="M4 8h12v6q0 1-1 1H5q-1 0-1-1z" fill="#185abd" />
        <rect x="0" y="4" width="8.500" height="8.500" rx="1" fill="#124a9c" />
        <path d="m1.700 6 1.200 4.500L4.300 7l1.300 3.500L6.900 6" fill="none" stroke="#fff" strokeWidth="1.100" />
      </>
    ),
  },
  {
    id: 'copilot',
    art: (
      <>
        <defs>
          <linearGradient id="cop" x2="0" y2="1">
            <stop offset="0" stopColor="#8a5cf0" />
            <stop offset=".5" stopColor="#f0567a" />
            <stop offset="1" stopColor="#f9a03c" />
          </linearGradient>
          <linearGradient id="cop2" x2="0" y2="1">
            <stop offset="0" stopColor="#1f8ee8" />
            <stop offset=".5" stopColor="#28b4b0" />
            <stop offset="1" stopColor="#e8c230" />
          </linearGradient>
        </defs>
        <path d="M5 1h5.500Q9 2 8.300 4L6.500 10.500Q6 12 4.500 12h-2Q-.5 12 .5 9L2 4q1-3 3-3z" fill="url(#cop2)" />
        <path d="M11 15H5.500Q7 14 7.700 12L9.500 5.500Q10 4 11.500 4h2q3 0 2 3L14 12q-1 3-3 3z" fill="url(#cop)" />
        <path d="M6 1h5q1.500 0 2 2l.3 1h-2Q10 4 9.500 5.500L8.700 8z" fill="#2a5fd8" />
      </>
    ),
  },
  {
    id: 'explorer',
    art: (
      <>
        <path d="M0 2.500Q0 1 1.500 1H6l2 2h6.500Q16 3 16 4.500V8H0z" fill="#e0a21c" />
        <path d="M0 5h16v8.500q0 1.500-1.500 1.500h-13Q0 15 0 13.500z" fill="#fcd354" />
        <path d="M3 15v-3q0-1 1-1h8q1 0 1 1v3z" fill="#2f7fc9" />
      </>
    ),
  },
  {
    id: 'edge',
    art: (
      <>
        <circle cx="8" cy="8" r="8" fill="#1572c4" />
        <path d="M0 8C0 2.500 4 0 8 0c5 0 8 3.500 8 6.500S13.500 11 11 11 9 9.500 9.500 8.500 9.800 5 6.500 5 1 7 0 8z" fill="#3fc7a8" />
        <path d="M0 8C0 2.500 4 0 8 0c1.500 0 3 .5 4 1C8 1 3 3 0 8z" fill="#2fb0e0" />
        <path d="M6 7.500C5 12 9 14.500 14 12.500 12 15 9 16 7 15.800 3 14.500 3 9 6 7.500z" fill="#0c4f9c" />
        <path d="M9.800 7q.6 2-.2 2.800-.4 1.200 1.400 1.200 4 0 5-3v3l-2 1.300Q8.500 14 7 10z" fill="#e6e3ee" />
      </>
    ),
  },
  {
    id: 'store',
    art: (
      <>
        <path d="M5 4V2q0-1 1-1h4q1 0 1 1v2" fill="none" stroke="#3ba0dc" strokeWidth="1.300" />
        <rect x=".5" y="3.500" width="15" height="12" rx="2" fill="#1b4c86" />
        <path d="M5 6.500h2.700v2.700H5z" fill="#f25022" />
        <path d="M8.300 6.500H11v2.700H8.300z" fill="#7fba00" />
        <path d="M5 9.800h2.700v2.700H5z" fill="#00a4ef" />
        <path d="M8.300 9.800H11v2.700H8.300z" fill="#ffb900" />
      </>
    ),
  },
  {
    id: 'excel',
    art: (
      <>
        <rect x="4" y="1" width="12" height="14" rx="1" fill="#21a366" />
        <path d="M10 1h5q1 0 1 1v6h-6z" fill="#33c481" />
        <path d="M4 8h12v6q0 1-1 1H5q-1 0-1-1z" fill="#107c41" />
        <rect x="0" y="4" width="8.500" height="8.500" rx="1" fill="#0d6335" />
        <path d="m2.500 6 3.600 4.700M6.100 6l-3.600 4.700" stroke="#fff" strokeWidth="1.200" />
      </>
    ),
  },
  {
    id: 'notepad',
    art: (
      <>
        <path d="M1.500 1.500h12v14h-12z" fill="#f2f4ea" stroke="#8e968a" strokeWidth=".7" />
        <path d="M2 10.500h11V15H2z" fill="#9ccf5c" />
        <path d="M3 1v2M5.500 1v2M8 1v2M10.500 1v2" stroke="#555" strokeWidth=".8" />
        <path d="M4 5v4M6 7h3" stroke="#333" strokeWidth="1.200" />
        <path d="m15 2-7 10-.5 2 1.800-1L16 3.500z" fill="#b8c838" />
        <path d="m15 2-7 10" stroke="#4b7d25" strokeWidth=".8" />
      </>
    ),
  },
  {
    id: 'vscode',
    art: (
      <>
        <path d="M11.500.5 16 2.500v11l-4.500 2z" fill="#2aa5ee" />
        <path d="m.8 5.500 1.500-1.200 9.700 8.200v3z" fill="#1077bd" />
        <path d="m.8 10.500 1.500 1.200L12 3.500V.5z" fill="#0d86d1" />
      </>
    ),
  },
  { id: 'illustrator', active: true, art: null },
  {
    id: 'alphabet',
    art: (
      <>
        <path d="M0 3.500h15.500M4 3.500Q4 .5 9 1.500M3 4v4q2-1 3 .5M6 6q3-3 3 0t3 1V3.500M9.500 5.500q5-1.500 5 1t-2 2" fill="none" stroke="#cf1f3c" strokeWidth="1.700" />
        <path d="M0 11h7M2.500 11v3.500M5.500 11v4M8.500 11q-1 3 1.500 3t1.500-3M10 11h6M14.500 11v4.500l-2-1" fill="none" stroke="#3c9a5a" strokeWidth="1.400" />
      </>
    ),
  },
  {
    id: 'snip',
    running: true,
    art: (
      <>
        <rect x=".5" y=".5" width="11" height="11" rx="1" fill="#f4f4f6" />
        <path d="M2 2h8v8H2z" fill="none" stroke="#b8332a" strokeWidth="1.500" strokeDasharray="1.500 1.500" />
        <path d="M6 9h7M10 5.500v6.500" stroke="#6c7078" strokeWidth="1.300" />
        <circle cx="14.200" cy="9" r="1.600" fill="none" stroke="#2f9fe0" strokeWidth="1.300" />
        <circle cx="10" cy="14" r="1.600" fill="none" stroke="#2f9fe0" strokeWidth="1.300" />
      </>
    ),
  },
];

/* ---------- sections ---------- */

const TopMenu = () => (
  <MenuBar>
    <Slot $w={10} $gap={7}><AppMark $size={10} $font={6}>Ai</AppMark></Slot>
    <Slot $gap={9}><Icon name="home" size={13} color="#dadada" /></Slot>
    <Divider $gap={9} />
    <Slot $gap={10} />
    {menus.map(([label, w]) => (
      <Slot key={label} $w={w}>{label}</Slot>
    ))}
    <Divider />
    <Slot $gap={8}><Icon name="layout" size={11} /></Slot>
    <Slot $gap={5}><Icon name="down" size={6} /></Slot>
    <Divider $gap={693} />
    <Slot $gap={7} $w={36}>Painting</Slot>
    <Icon name="down" size={6} />
    <Divider $gap={8} />
    <StockSearch>
      <Icon name="search" size={8} color="#dadada" />
      <Icon name="down" size={5} color="#dadada" />
      <span>Search Adobe Stock</span>
    </StockSearch>
    <WindowButtons>
      <Icon name="minimize" size={8} />
      <Slot $gap={8}><Icon name="restore" size={9} /></Slot>
      <Slot $gap={10}><Icon name="close" size={7} /></Slot>
    </WindowButtons>
  </MenuBar>
);

const Chevron = ({ gap, name = 'down' }: { gap: number; name?: string }) => (
  <Slot $gap={gap} $w={8} $center><Icon name={name} size={6} color="#e2e2e2" /></Slot>
);

const Spin = () => <Slot $w={8} $center><Icon name="spinner" size={9} /></Slot>;

const Controls = () => (
  <ControlBar>
    <Slot $gap={10} $w={53}>Path</Slot>
    <FillBox>?</FillBox>
    <Chevron gap={2} />
    <StrokeBox $gap={6} />
    <Chevron gap={3} />
    <Slot $gap={10} $w={27}><Dotted>Stroke:</Dotted></Slot>
    <Spin />
    <Field $w={29}>0.25 pt</Field>
    <Chevron gap={4} />
    <StrokePreview $gap={7} $w={60}>Uniform</StrokePreview>
    <Chevron gap={2} />
    <StrokePreview $gap={6} $w={58}>Basic</StrokePreview>
    <Chevron gap={2} />
    <Slot $gap={7} $w={28}><Dotted>Opacity:</Dotted></Slot>
    <Field $w={33}>100%</Field>
    <Chevron gap={2} name="right" />
    <Slot $gap={7} $w={20}>Style:</Slot>
    <StyleSwatch />
    <Chevron gap={2} />
    <Slot $gap={13}><Icon name="globe" /></Slot>
    <Slot $gap={14} $w={18}><Icon name="dotted" size={13} /><Icon name="down" size={5} /></Slot>
    {alignIcons.map(([name, gap]) => (
      <Slot key={name} $gap={gap}><Icon name={name} /></Slot>
    ))}
    <Slot $gap={10}><Icon name="refPoint" size={15} /></Slot>
    <Slot $gap={6} $w={12}><Dotted>X:</Dotted></Slot>
    <Spin />
    <Field $w={39}>60.9602 px</Field>
    <Slot $gap={6} $w={12}><Dotted>Y:</Dotted></Slot>
    <Spin />
    <Field $gap={1} $w={38}>82.3506 px</Field>
    <Slot $gap={7} $w={14}><Dotted>W:</Dotted></Slot>
    <Spin />
    <Field $gap={1} $w={39}>58.765 px</Field>
    <Slot $gap={6} $w={13} $center><Icon name="unlink" size={10} /></Slot>
    <Slot $gap={6} $w={13}><Dotted>H:</Dotted></Slot>
    <Spin />
    <Field $gap={1} $w={40}>136.0558 px</Field>
    <Slot $gap={6} $w={14}><Icon name="isolate" /></Slot>
    <Chevron gap={1} />
    <Slot $gap={109} $w={12} $center><Icon name="fourGrid" size={9} /></Slot>
    <Slot $gap={5} $w={12} $center><Icon name="snap" size={10} /></Slot>
    <Slot $gap={3} $w={8} $center><Icon name="down" size={5} color="#7d7d7d" /></Slot>
    <Slot $gap={9} $w={12} $center><Icon name="list" size={9} /></Slot>
  </ControlBar>
);

const Toolbox = () => (
  <ToolColumn>
    <Strip><Icon name="collapseL" size={6} /></Strip>
    <Grip />
    <ToolGrid>
      {tools.map(([name, more], i) => (
        <Tool key={name} $active={i === 0} $more={more}>
          {name === 'gradient' ? <GradientIcon size={12} /> : <Icon name={name} size={12} />}
        </Tool>
      ))}
    </ToolGrid>
    <PaintBoxes>
      <PaintStroke />
      <PaintFill>?</PaintFill>
      <Corner $x={29} $y={1}><Icon name="swap" size={8} color="#777" /></Corner>
      <Corner $x={0} $y={28}><Icon name="defaults" size={8} /></Corner>
    </PaintBoxes>
    <ToolRow $top={4}>
      <ToolChip $dark><Chip $bg="#fff" /></ToolChip>
      <ToolChip $dark><Chip $bg="radial-gradient(#fff, #6db4e0)" /></ToolChip>
      <ToolChip $dark><Chip $bg={noneFill} /></ToolChip>
    </ToolRow>
    <ToolRow $top={4}>
      <ToolChip $dark><Icon name="modeNormal" size={9} /></ToolChip>
      <ToolChip><Icon name="modeBehind" size={9} /></ToolChip>
      <ToolChip><Icon name="modeBehind" size={8} color="#686969" /></ToolChip>
    </ToolRow>
    <ToolRow $top={3}><Slot $gap={12}><Icon name="screens" size={16} /></Slot></ToolRow>
    <Dots />
  </ToolColumn>
);

const DocumentArea = () => (
  <Document>
    <DocTabs>
      <DocTab>
        <span>Untitled-3* @ 354.35% (CMYK/Preview)</span>
        <Icon name="closeBold" size={5} color="#fff" />
      </DocTab>
    </DocTabs>
    <Canvas>
      <Pasteboard>
        <Artboard><Artwork /></Artboard>
      </Pasteboard>
      <VScroll>
        <Icon name="up" size={6} color="#a5a5a5" />
        <Thumb $w={9} $h={17} />
        <Icon name="down" size={6} color="#a5a5a5" />
      </VScroll>
    </Canvas>
    <StatusBar>
      <Field $gap={2} $w={35} $h={10}>354.35%</Field>
      <Chevron gap={1} />
      <Slot $gap={7}><Icon name="first" size={7} color="#777" /></Slot>
      <Slot $gap={5}><Icon name="prev" size={6} color="#777" /></Slot>
      <Field $gap={5} $w={28} $h={10}>1</Field>
      <Chevron gap={1} />
      <Slot $gap={7}><Icon name="next" size={6} color="#777" /></Slot>
      <Slot $gap={5}><Icon name="last" size={6} color="#777" /></Slot>
      <Slot $gap={9} $w={128} $center>Selection</Slot>
      <Slot $gap={5}><Icon name="next" size={7} color="#eee" /></Slot>
      <Slot $gap={6}><Icon name="left" size={5} color="#aaa" /></Slot>
      <Slot $gap={354}><Thumb $w={17} $h={9} /></Slot>
      <Slot $gap={355}><Icon name="right" size={5} color="#aaa" /></Slot>
    </StatusBar>
  </Document>
);

const PathfinderPanel = () => (
  <Pathfinder>
    <TabStrip $h={19}>
      <Tab $w={46}>Transform</Tab>
      <Tab $w={23}>Align</Tab>
      <Tab $w={42} $active>Pathfinder</Tab>
      <Push>
        <Icon name="doubleRight" size={7} />
        <Divider />
        <Icon name="menu" size={7} color="#aaa" />
      </Push>
    </TabStrip>
    <PathLabel>Shape Modes:</PathLabel>
    <PathRow $start={6.5} $gap={13.5}>
      {['unite', 'minusFront', 'intersect', 'exclude'].map((n) => <Icon key={n} name={n} size={11} />)}
      <Expand>Expand</Expand>
    </PathRow>
    <PathLabel>Pathfinders:</PathLabel>
    <PathRow $start={8.5} $gap={13.900}>
      {['divide', 'trim', 'unite', 'crop', 'outline', 'minusBack'].map((n) => <Icon key={n} name={n} size={11} />)}
    </PathRow>
  </Pathfinder>
);

const dockGroups: [number, string[]][] = [
  [46, ['gear', 'info']],
  [46, ['sun', 'export']],
  [46, ['gradient', 'transparency']],
  [64, ['transform', 'alignL', 'pathfinder']],
  [29, ['openOut']],
];

const PanelTabs = ({ tabs, h }: { tabs: [string, number][]; h?: number }) => (
  <TabStrip $h={h}>
    {tabs.map(([label, w], i) => (
      <Tab key={label} $w={w} $active={i === 0}>
        {label.startsWith('Color') && <Icon name="spinner" size={5} />}
        {label}
      </Tab>
    ))}
    <Push><Icon name="menu" size={8} color="#b5b5b5" /></Push>
  </TabStrip>
);

const RightDock = () => (
  <DockArea>
    <DockHead>
      <Strip $right><Icon name="collapseL" size={6} /></Strip>
      <Strip $right><Icon name="collapseR" size={6} /></Strip>
    </DockHead>
    <DockBody>
      <IconDock>
        {dockGroups.map(([h, names]) => (
          <DockGroup key={names[0]} $h={h}>
            <Grip />
            {names.map((n) => (
              <DockItem key={n} $active={n === 'pathfinder'}>
                {n === 'gradient' ? <GradientIcon size={12} /> : <Icon name={n} size={12} />}
              </DockItem>
            ))}
          </DockGroup>
        ))}
      </IconDock>
      <Panels>
        <Panel $h={144}>
          <PanelTabs tabs={[['Color', 32]]} h={17} />
          <QuickColors>
            <Chip $bg={noneFill} />
            <Chip $bg="#000" />
            <Chip $bg="#fff" />
          </QuickColors>
          <Spectrum />
        </Panel>
        <Panel $h={145}>
          <PanelTabs tabs={[['Swatches', 40], ['Libraries', 40]]} />
          <SwatchTop>
            <MiniPaint>
              <MiniStroke />
              <MiniFill>?</MiniFill>
            </MiniPaint>
            <ViewToggle>
              <ViewButton><Icon name="lines" size={10} /></ViewButton>
              <ViewButton $active><Icon name="grid" size={11} color="#fff" /></ViewButton>
            </ViewToggle>
          </SwatchTop>
          <SwatchWell>
            {swatchRows.map((row, r) => (
              <SwatchRow key={r}>
                {row.map((c, i) => <Swatch key={i} $bg={c} />)}
              </SwatchRow>
            ))}
            <SwatchRow $top={1.5}>
              <Icon name="folder" size={8} />
              {grays.map((c) => <Swatch key={c} $bg={c} />)}
            </SwatchRow>
            <SwatchRow $top={2}>
              <Icon name="folder" size={8} />
              {brights.map((c) => <Swatch key={c} $bg={c} />)}
            </SwatchRow>
          </SwatchWell>
          <PanelFoot $pad={6}>
            <Icon name="library" size={9} />
            <Slot $gap={9}><Icon name="kuler" size={9} /></Slot>
            <Slot $gap={9}><Icon name="refresh" size={8} color="#6c6d6d" /></Slot>
            <Slot $gap={13}><Icon name="grid" size={8} /></Slot>
            <Slot $gap={10}><Icon name="options" size={8} color="#6c6d6d" /></Slot>
            <Slot $gap={9}><Icon name="folder" size={9} /></Slot>
            <Slot $gap={9}><Icon name="plus" size={8} color="#6c6d6d" /></Slot>
            <Slot $gap={9}><Icon name="trash" size={8} color="#6c6d6d" /></Slot>
          </PanelFoot>
        </Panel>
        <Panel $h={46}>
          <PanelTabs tabs={[['Color Guide', 52]]} />
          <GuideRow>
            <BaseColor $size={13} />
            <Harmony>
              <BaseColor $size={11} />
              {['#aa9c9d', '#b0af9c', '#cdeccc', '#8482b0'].map((c) => <HarmonyColor key={c} $bg={c} />)}
              <Slot $gap={20}><Icon name="down" size={6} color="#eee" /></Slot>
            </Harmony>
            <Slot $gap={6}><Icon name="globe" size={12} /></Slot>
            <Slot $gap={6}><Icon name="addGroup" size={11} /></Slot>
          </GuideRow>
        </Panel>
        <Panel $h={145}>
          <PanelTabs tabs={[['Brushes', 35], ['Stroke', 35], ['Symbols', 39]]} />
          <BrushArea>
            <BrushList>
              <BrushDots>
                {[4, 10, 2, 3, 1, 8].map((d) => <BrushDot key={d} $d={d} />)}
              </BrushDots>
              <BrushRow><BasicLine />Basic</BrushRow>
              <BrushRow><CharcoalBrush /></BrushRow>
              <BrushRow><RibbonBrush /></BrushRow>
              <BrushRow>
                <Icon name="bristle" size={12} color="#222" />
                <Slot $gap={6} $w={29}>6.00</Slot>
                <WaveBrush />
              </BrushRow>
            </BrushList>
            <BrushScroll>
              <Icon name="up" size={5} color="#999" />
              <BrushThumb />
              <Icon name="down" size={5} color="#999" />
            </BrushScroll>
          </BrushArea>
          <PanelFoot $pad={6}>
            <Icon name="library" size={9} />
            <Slot $gap={8}><Icon name="folderCloud" size={12} /></Slot>
            <Slot $gap={46}><Icon name="close" size={7} color="#707171" /></Slot>
            <Slot $gap={10}><Icon name="options" size={8} color="#707171" /></Slot>
            <Slot $gap={10}><Icon name="plus" size={8} /></Slot>
            <Slot $gap={9}><Icon name="trash" size={8} color="#6c6d6d" /></Slot>
          </PanelFoot>
        </Panel>
        <Panel $h={148}>
          <PanelTabs tabs={[['Layers', 31]]} />
          <LayerRow>
            <Slot $gap={3} $w={9}><Icon name="eye" size={8} /></Slot>
            <LayerBar />
            <Slot $gap={4}><Icon name="right" size={6} color="#fff" /></Slot>
            <Slot $gap={7}><ThumbArt /></Slot>
            <Slot $gap={4}>Layer 1</Slot>
            <LayerTarget />
            <LayerSelected />
          </LayerRow>
          <LayerWell />
          <PanelFoot $pad={3} $h={14}>
            <Slot $w={44}>1 Layer</Slot>
            <Icon name="openOut" size={8} />
            <Slot $gap={9}><Icon name="search" size={8} /></Slot>
            <Slot $gap={9}><Icon name="clip" size={8} /></Slot>
            <Slot $gap={9}><Icon name="sublayer" size={10} /></Slot>
            <Slot $gap={8}><Icon name="plus" size={8} /></Slot>
            <Slot $gap={9}><Icon name="trash" size={8} color="#6c6d6d" /></Slot>
          </PanelFoot>
        </Panel>
      </Panels>
    </DockBody>
  </DockArea>
);

const BottomTaskbar = () => (
  <Taskbar>
    <Weather>
      <svg width="18" height="20" viewBox="0 0 18 20">
        <path d="M1 13c4 .5 8-1 10-6l4 1c.5 7-10 13-14 5z" fill="#f0982c" />
        <circle cx="12" cy="6" r="5.300" fill="#bf1722" />
        <text x="12" y="8.800" fontSize="8" fill="#fff" textAnchor="middle">4</text>
      </svg>
      <div>
        63°F
        <small>Clear</small>
      </div>
    </Weather>
    <Slot $gap={13}><WindowsLogo /></Slot>
    <Slot $gap={4}>
      <TaskSearch>
        <Icon name="search" size={10} color="#222" />
        Search
        <Push><FootballArt /></Push>
      </TaskSearch>
    </Slot>
    <Slot $gap={1.5}>
      {appIcons.map(({ id, art, active, running }) => (
        <TaskApp key={id} $active={active} $running={running}>
          {art ? (
            <svg width="16" height="16" viewBox="0 0 16 16">{art}</svg>
          ) : (
            <AppMark $size={14} $font={8}>Ai</AppMark>
          )}
        </TaskApp>
      ))}
    </Slot>
    <Tray>
      <Slot $gap={0}><Icon name="up" size={7} color="#333" /></Slot>
      <Slot $gap={12}>
        <svg width="12" height="10" viewBox="0 0 12 10" fill="none" stroke="#444" strokeWidth="1.100">
          <path d="M3 8.500a2.500 2.500 0 0 1 0-5 3.200 3.200 0 0 1 6 .5 2.300 2.300 0 0 1 0 4.500zM1.500.5l9 9" />
        </svg>
      </Slot>
      <Slot $gap={9}>
        <svg width="12" height="12" viewBox="0 0 12 12" fill="none" stroke="#333">
          <path d="M7 1.500H1v7h9V6M3 11h5M5.500 8.500V11" />
          <path d="M8.500 1.500h2.500v3H8.500zM9.700 4.500V7" />
        </svg>
      </Slot>
      <Slot $gap={4}>
        <svg width="11" height="10" viewBox="0 0 11 10" fill="none" stroke="#333">
          <path d="M1 3.500h1.700L5.500 1v8L2.700 6.500H1zM7 3.500q1 1.500 0 3" />
          <path d="M8.500 2q2 3 0 6" stroke="#bbb" />
        </svg>
      </Slot>
      <Slot $gap={4}>
        <Clock>8:36 PM<br />1/10/2026</Clock>
      </Slot>
      <Slot $gap={5}>
        <svg width="10" height="11" viewBox="0 0 10 11" fill="#222">
          <path d="M0 8.500 1.500 7V4.500Q2 1.500 4.500 1.500L8 1v5.500l1.500 2zM3 9.200h3.500L4.800 11z" />
          <path d="M4 3.500h2L4 6h2" fill="none" stroke="#ddd" strokeWidth=".7" />
        </svg>
      </Slot>
    </Tray>
  </Taskbar>
);

export default function App() {
  return (
    <Shell>
      <GlobalStyle />
      <TopMenu />
      <Controls />
      <Workspace>
        <Toolbox />
        <DocumentArea />
        <RightDock />
        <PathfinderPanel />
      </Workspace>
      <BottomTaskbar />
    </Shell>
  );
}
